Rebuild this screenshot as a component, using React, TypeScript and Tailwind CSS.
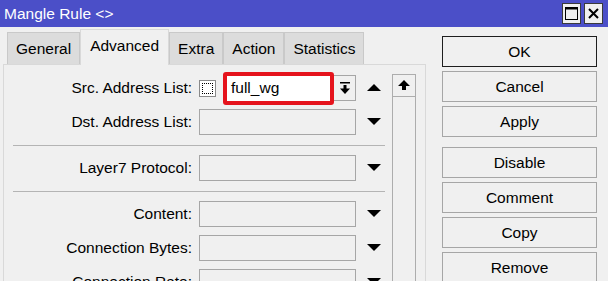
import React from "react";

const font = { fontFamily: '"Liberation Sans", Arial, sans-serif' };

function DownTriangle() {
  return (
    <svg width="14" height="8" viewBox="0 0 14 8">
      <polygon points="0,0 14,0 7,7" fill="#000" />
    </svg>
  );
}

function UpTriangle() {
  return (
    <svg width="14" height="8" viewBox="0 0 14 8">
      <polygon points="0,7 14,7 7,0" fill="#000" />
    </svg>
  );
}

function Field() {
  return <div className="h-[26px] w-[157px] border border-[#a6a6a6] bg-[#f0f0f0]" />;
}

function Row({ label, children }: { label: string; children?: React.ReactNode }) {
  return (
    <div className="flex h-[26px] items-center">
      <div className="w-[190px] text-right text-[15.5px] text-black">{label}</div>
      <div className="ml-[7px] flex items-center">
        {children ?? (
          <>
            <Field />
            <div className="flex w-[36px] justify-center">
              <DownTriangle />
            </div>
          </>
        )}
      </div>
    </div>
  );
}

function Separator() {
  return <div className="mb-[9px] ml-[9px] mt-[10px] h-px w-[372px] bg-[#b4b4b4]" />;
}

const tabs = ["General", "Advanced", "Extra", "Action", "Statistics"];
const buttons = ["OK", "Cancel", "Apply", "Disable", "Comment", "Copy", "Remove"];

export default function App() {
  return (
    <div className="h-[281px] w-[608px] overflow-hidden bg-[#f0f0f0]" style={font}>
      {/* title bar */}
      <div className="flex h-[27px] items-center justify-between bg-[#4b4fc8] pl-[4px] pr-[5px]">
        <span className="text-[15.5px] text-white">Mangle Rule &lt;&gt;</span>
        <div className="flex gap-[3px]">
          <div className="flex h-[21px] w-[19px] items-center justify-center border border-[#3a3a3a] bg-[#f0f0f0]">
            <svg width="13" height="13" viewBox="0 0 13 13">
              <rect x="0.5" y="0.5" width="12" height="12" fill="none" stroke="#000" />
              <rect x="0" y="0" width="13" height="2.5" fill="#000" />
            </svg>
          </div>
          <div className="flex h-[21px] w-[19px] items-center justify-center border border-[#3a3a3a] bg-[#f0f0f0]">
            <svg width="11" height="11" viewBox="0 0 11 11">
              <path d="M1 1 L10 10 M10 1 L1 10" stroke="#000" strokeWidth="2" />
            </svg>
          </div>
        </div>
      </div>

      <div className="flex">
        {/* left: tabs + panel */}
        <div className="w-[426px] pl-[3px]">
          <div className="flex h-[37px] items-end pl-[4px]">
            {tabs.map((t) =>
              t === "Advanced" ? (
                <div
                  key={t}
                  className="relative z-10 -mb-px flex h-[36px] items-center border border-b-0 border-[#d9d9d9] bg-[#f0f0f0] px-[9px] pb-[3px] text-[15.5px] text-black"
                >
                  {t}
                </div>
              ) : (
                <div
                  key={t}
                  className="flex h-[32px] items-center border border-b-0 border-[#c9c9c9] bg-[#dcdcdc] px-[8px] text-[15.5px] text-black"
                >
                  {t}
                </div>
              )
            )}
          </div>
          <div className="flex h-[230px] border border-[#d9d9d9] bg-[#f0f0f0]">
            <div className="w-[388px] pt-[10px]">
              <Row label="Src. Address List:">
                <div className="flex h-[17px] w-[17px] items-center justify-center border border-[#8a8a8a] bg-white">
                  <div className="h-[11px] w-[11px] border border-dotted border-black" />
                </div>
                <div className="ml-[7px] flex h-[33px] w-[111px] items-center rounded-[3px] border-[4px] border-[#e5131c] bg-white pl-[4px] text-[15.5px] text-black">
                  full_wg
                </div>
                <div className="flex h-[26px] w-[22px] items-center justify-center border border-l-0 border-[#a6a6a6] bg-[#f0f0f0]">
                  <svg width="12" height="13" viewBox="0 0 12 13">
                    <rect x="1" y="0" width="10" height="1.5" fill="#000" />
                    <rect x="4.5" y="3" width="3" height="4" fill="#000" />
                    <polygon points="1,6.5 11,6.5 6,12" fill="#000" />
                  </svg>
                </div>
                <div className="flex w-[36px] justify-center">
                  <UpTriangle />
                </div>
              </Row>
              <div className="h-[8px]" />
              <Row label="Dst. Address List:" />
              <Separator />
              <Row label="Layer7 Protocol:" />
              <Separator />
              <Row label="Content:" />
              <div className="h-[8px]" />
              <Row label="Connection Bytes:" />
              <div className="h-[8px]" />
              <Row label="Connection Rate:" />
            </div>
            {/* scrollbar */}
            <div className="mt-[9px] flex h-[260px] w-[24px] flex-col border border-[#adadad] bg-[#f0f0f0]">
              <div className="flex h-[22px] items-center justify-center border-b border-[#adadad]">
                <svg width="12" height="12" viewBox="0 0 12 12">
                  <polygon points="6,0 12,6 8,6 8,10 4,10 4,6 0,6" fill="#000" />
                </svg>
              </div>
            </div>
          </div>
        </div>

        {/* right: buttons */}
        <div className="ml-[16px] flex w-[155px] flex-col pt-[9px]">
          {buttons.map((b, i) => (
            <div
              key={b}
              className={`flex h-[31px] items-center justify-center border bg-[#f0f0f0] text-[15.5px] text-black ${
                b === "OK" ? "border-[#1e1e1e]" : "border-[#a6a6a6]"
              } ${i === 0 ? "" : i === 3 ? "mt-[10px]" : "mt-[4px]"}`}
            >
              {b}
            </div>
          ))}
        </div>
      </div>
    </div>
  );
}
